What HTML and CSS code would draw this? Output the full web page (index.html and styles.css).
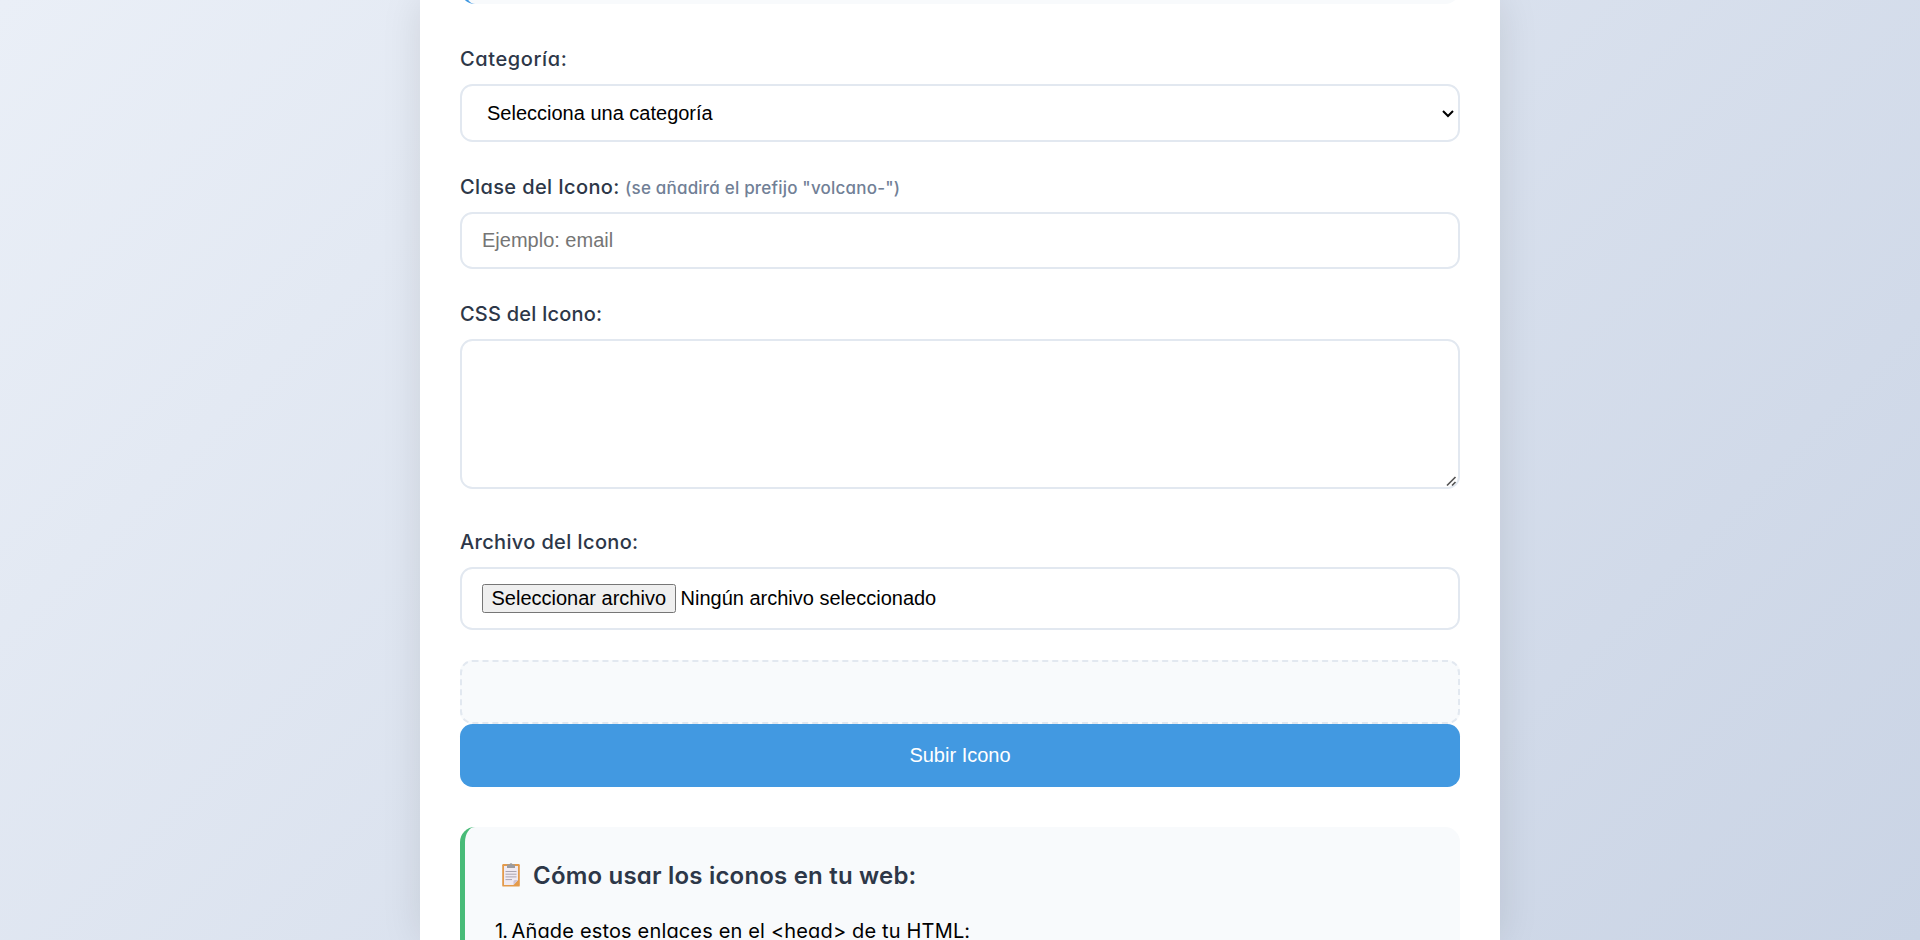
FILE: index.html
```html
<!DOCTYPE html>
<html lang="es">
<head>
<meta charset="utf-8">
<title>Subir Icono</title>
<link rel="stylesheet" href="styles.css">
</head>
<body>
<main class="card">
  <div class="intro"></div>
  <form class="form">
    <div class="group">
      <label class="label" for="cat"><span class="t-cat">Categoría:</span></label>
      <select class="field select" id="cat"><option>Selecciona una categoría</option></select>
    </div>
    <div class="group">
      <label class="label" for="cls"><span class="t-cls">Clase del Icono:</span> <small class="hint">(se añadirá el prefijo "volcano-")</small></label>
      <input class="field input" id="cls" type="text" placeholder="Ejemplo: email">
    </div>
    <div class="group group-css">
      <label class="label" for="css"><span class="t-css">CSS del Icono:</span></label>
      <div class="area-wrap">
        <textarea class="field area" id="css"></textarea>
        <svg class="grip" viewBox="0 0 11 11" width="11" height="11"><path d="M1 9.5 9.5 1M6 9.5 9.5 6" stroke="#555" stroke-width="1.7" fill="none"/></svg>
      </div>
    </div>
    <div class="group">
      <div class="label"><span class="t-file">Archivo del Icono:</span></div>
      <div class="field file"><button class="pick" type="button">Seleccionar archivo</button><span>Ningún archivo seleccionado</span></div>
    </div>
    <div class="preview"></div>
    <button class="submit" type="button">Subir Icono</button>
  </form>
  <section class="usage">
    <h3 class="title">
      <svg class="clip" viewBox="0 0 18 24" width="18" height="24"><rect x=".2" y="1" width="17.6" height="22.6" rx="1.2" fill="#e39a4b"/><path d="M2 3h14v14l-4.500 5H2z" fill="#f0eaf2"/><path d="M11.500 22v-3.500q0-1.500 1.500-1.500h3z" fill="#cfc4d6"/><path d="M5 1.500h2.500Q7.700.2 9 .2t1.500 1.300H13V5H5z" fill="#9b9b9f"/><path d="M3.500 8.500h11M3.500 11.200h11M3.500 13.900h11M3.500 16.600h6.500" stroke="#aaa4b0" stroke-width="1"/></svg>
      <span class="t-title">Cómo usar los iconos en tu web:</span>
    </h3>
    <p class="step"><span class="num">1. </span>Añade estos enlaces en el &lt;head&gt; de tu HTML:</p>
  </section>
</main>
</body>
</html>
```
FILE: styles.css
```css
* { box-sizing: border-box; }

html { height: 100%; overflow: hidden; }

body {
  margin: 0;
  height: 940px;
  overflow: hidden;
  background: linear-gradient(135deg, #eaeff7 0%, #cad4e5 100%);
  font-family: Inter, sans-serif;
  font-feature-settings: "cv11", "ss03";
}

.card {
  width: 1080px;
  height: 940px;
  margin: 0 auto;
  padding: 0 40px;
  overflow: hidden;
  background: #fff;
  box-shadow: 0 0 38px rgba(0, 0, 0, .1);
}

.intro {
  height: 4px;
  overflow: hidden;
}

.intro::before {
  content: "";
  display: block;
  height: 60px;
  margin-top: -56px;
  background: #f8fafc;
  border-left: 5px solid #4299e1;
  border-radius: 15px;
}

.form { padding-top: 40px; }

.group { margin-bottom: 30px; }
.group-css { margin-bottom: 38px; }

.label {
  display: block;
  height: 30px;
  margin-bottom: 10px;
  font-size: 20px;
  font-weight: 500;
  line-height: 30px;
  color: #2d3748;
  white-space: nowrap;
}

.t-cat { letter-spacing: .6px; }
.t-cls { letter-spacing: .38px; }
.t-css { letter-spacing: .2px; }
.t-file { letter-spacing: .34px; }
.t-title { letter-spacing: .2px; }

.hint { font-size: 17px; letter-spacing: .2px; color: #718096; }

.field {
  display: block;
  width: 100%;
  border: 2px solid #e2e8f0;
  border-radius: 12.5px;
  background: #fff;
  font: 20px "Liberation Sans", Arial, sans-serif;
  color: #000;
}

.select {
  zoom: 1.25;
  height: 46.4px;
  border-width: 1.6px;
  border-radius: 10px;
  padding: 0 0 0 16px;
  font-size: 16px;
}

.input { height: 57px; padding: 0 20px; }
.input::placeholder { color: #757575; }

.area-wrap { position: relative; }
.area { height: 150px; resize: none; }
.grip { position: absolute; right: 3px; bottom: 2px; }

.file {
  display: flex;
  align-items: center;
  gap: 5px;
  height: 63px;
  padding: 0 20px;
}

.pick {
  height: 29px;
  padding: 0 8.5px;
  border: 1px solid #767676;
  border-radius: 2.5px;
  background: #efefef;
  font: inherit;
  color: #000;
}

.preview {
  height: 64px;
  border: 2px dashed #e2e8f0;
  border-radius: 12.5px;
  background: #f8fafc;
}

.submit {
  display: block;
  width: 100%;
  height: 63px;
  border: 0;
  border-radius: 12.5px;
  background: #4299e1;
  font: 20px "Liberation Sans", Arial, sans-serif;
  color: #fff;
}

.usage {
  height: 113px;
  margin-top: 40px;
  padding: 28px 30px 0;
  overflow: hidden;
  border-left: 5px solid #48bb78;
  border-radius: 15px 15px 0 0;
  background: #f8fafc;
}

.title {
  display: flex;
  align-items: center;
  gap: 13px;
  height: 40px;
  margin: 0 0 19px;
  padding-left: 7px;
  font-size: 24px;
  font-weight: 600;
  color: #2d3748;
  white-space: nowrap;
}

.step {
  margin: 0;
  font-size: 20px;
  line-height: 34px;
  letter-spacing: .16px;
  color: #000;
  white-space: nowrap;
}

.num { letter-spacing: -1px; }
```
